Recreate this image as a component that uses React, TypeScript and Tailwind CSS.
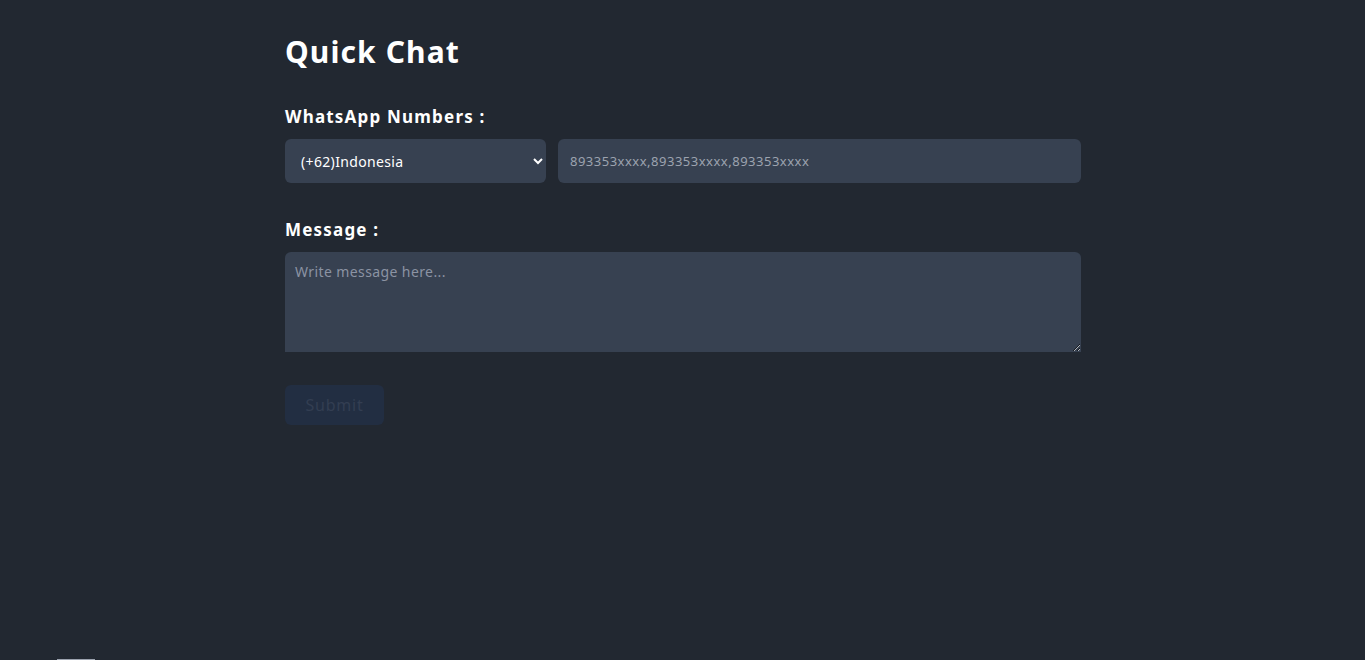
import React from "react";

export default function App() {
  return (
    <div
      className="min-h-[660px] bg-[#222831] text-white overflow-hidden"
      style={{ fontFamily: '"Noto Sans", "Open Sans", sans-serif' }}
    >
      <div className="h-[659px]">
        <div className="w-[796px] ml-[285px] pt-[30px]">
          <h1 className="text-[30px] font-bold leading-[44px] tracking-[1.1px]">Quick Chat</h1>
          <div className="mt-[30px] text-[17px] font-bold leading-[26px] tracking-[1.2px]">WhatsApp Numbers :</div>
          <div className="mt-[9px] flex gap-[12px]">
            <select
              defaultValue="62"
              className="w-[261px] h-[44px] rounded-md bg-[#374151] text-white text-[14px] tracking-[0.35px] pl-[12px] pr-[8px] outline-none"
            >
              <option value="62">(+62)Indonesia</option>
            </select>
            <input
              className="flex-1 h-[44px] rounded-md bg-[#374151] text-white text-[13px] tracking-[0.5px] px-[12px] outline-none placeholder:text-[#9ca3af]"
              placeholder="893353xxxx,893353xxxx,893353xxxx"
            />
          </div>
          <div className="mt-[34px] text-[17px] font-bold leading-[26px] tracking-[1.2px]">Message :</div>
          <textarea
            className="mt-[9px] block w-full h-[100px] rounded-t-md bg-[#374151] text-white text-[14px] tracking-[0.4px] px-[10px] py-[9px] outline-none placeholder:text-[#8b93a3]"
            placeholder="Write message here..."
          />
          <button className="mt-[33px] w-[99px] h-[40px] rounded-md bg-[#222e42] text-[#333e52] text-[16px] tracking-[0.8px]">
            Submit
          </button>
        </div>
      </div>
      <div className="ml-[57px] w-[38px] h-[1px] bg-[#9ca3af]" />
    </div>
  );
}
